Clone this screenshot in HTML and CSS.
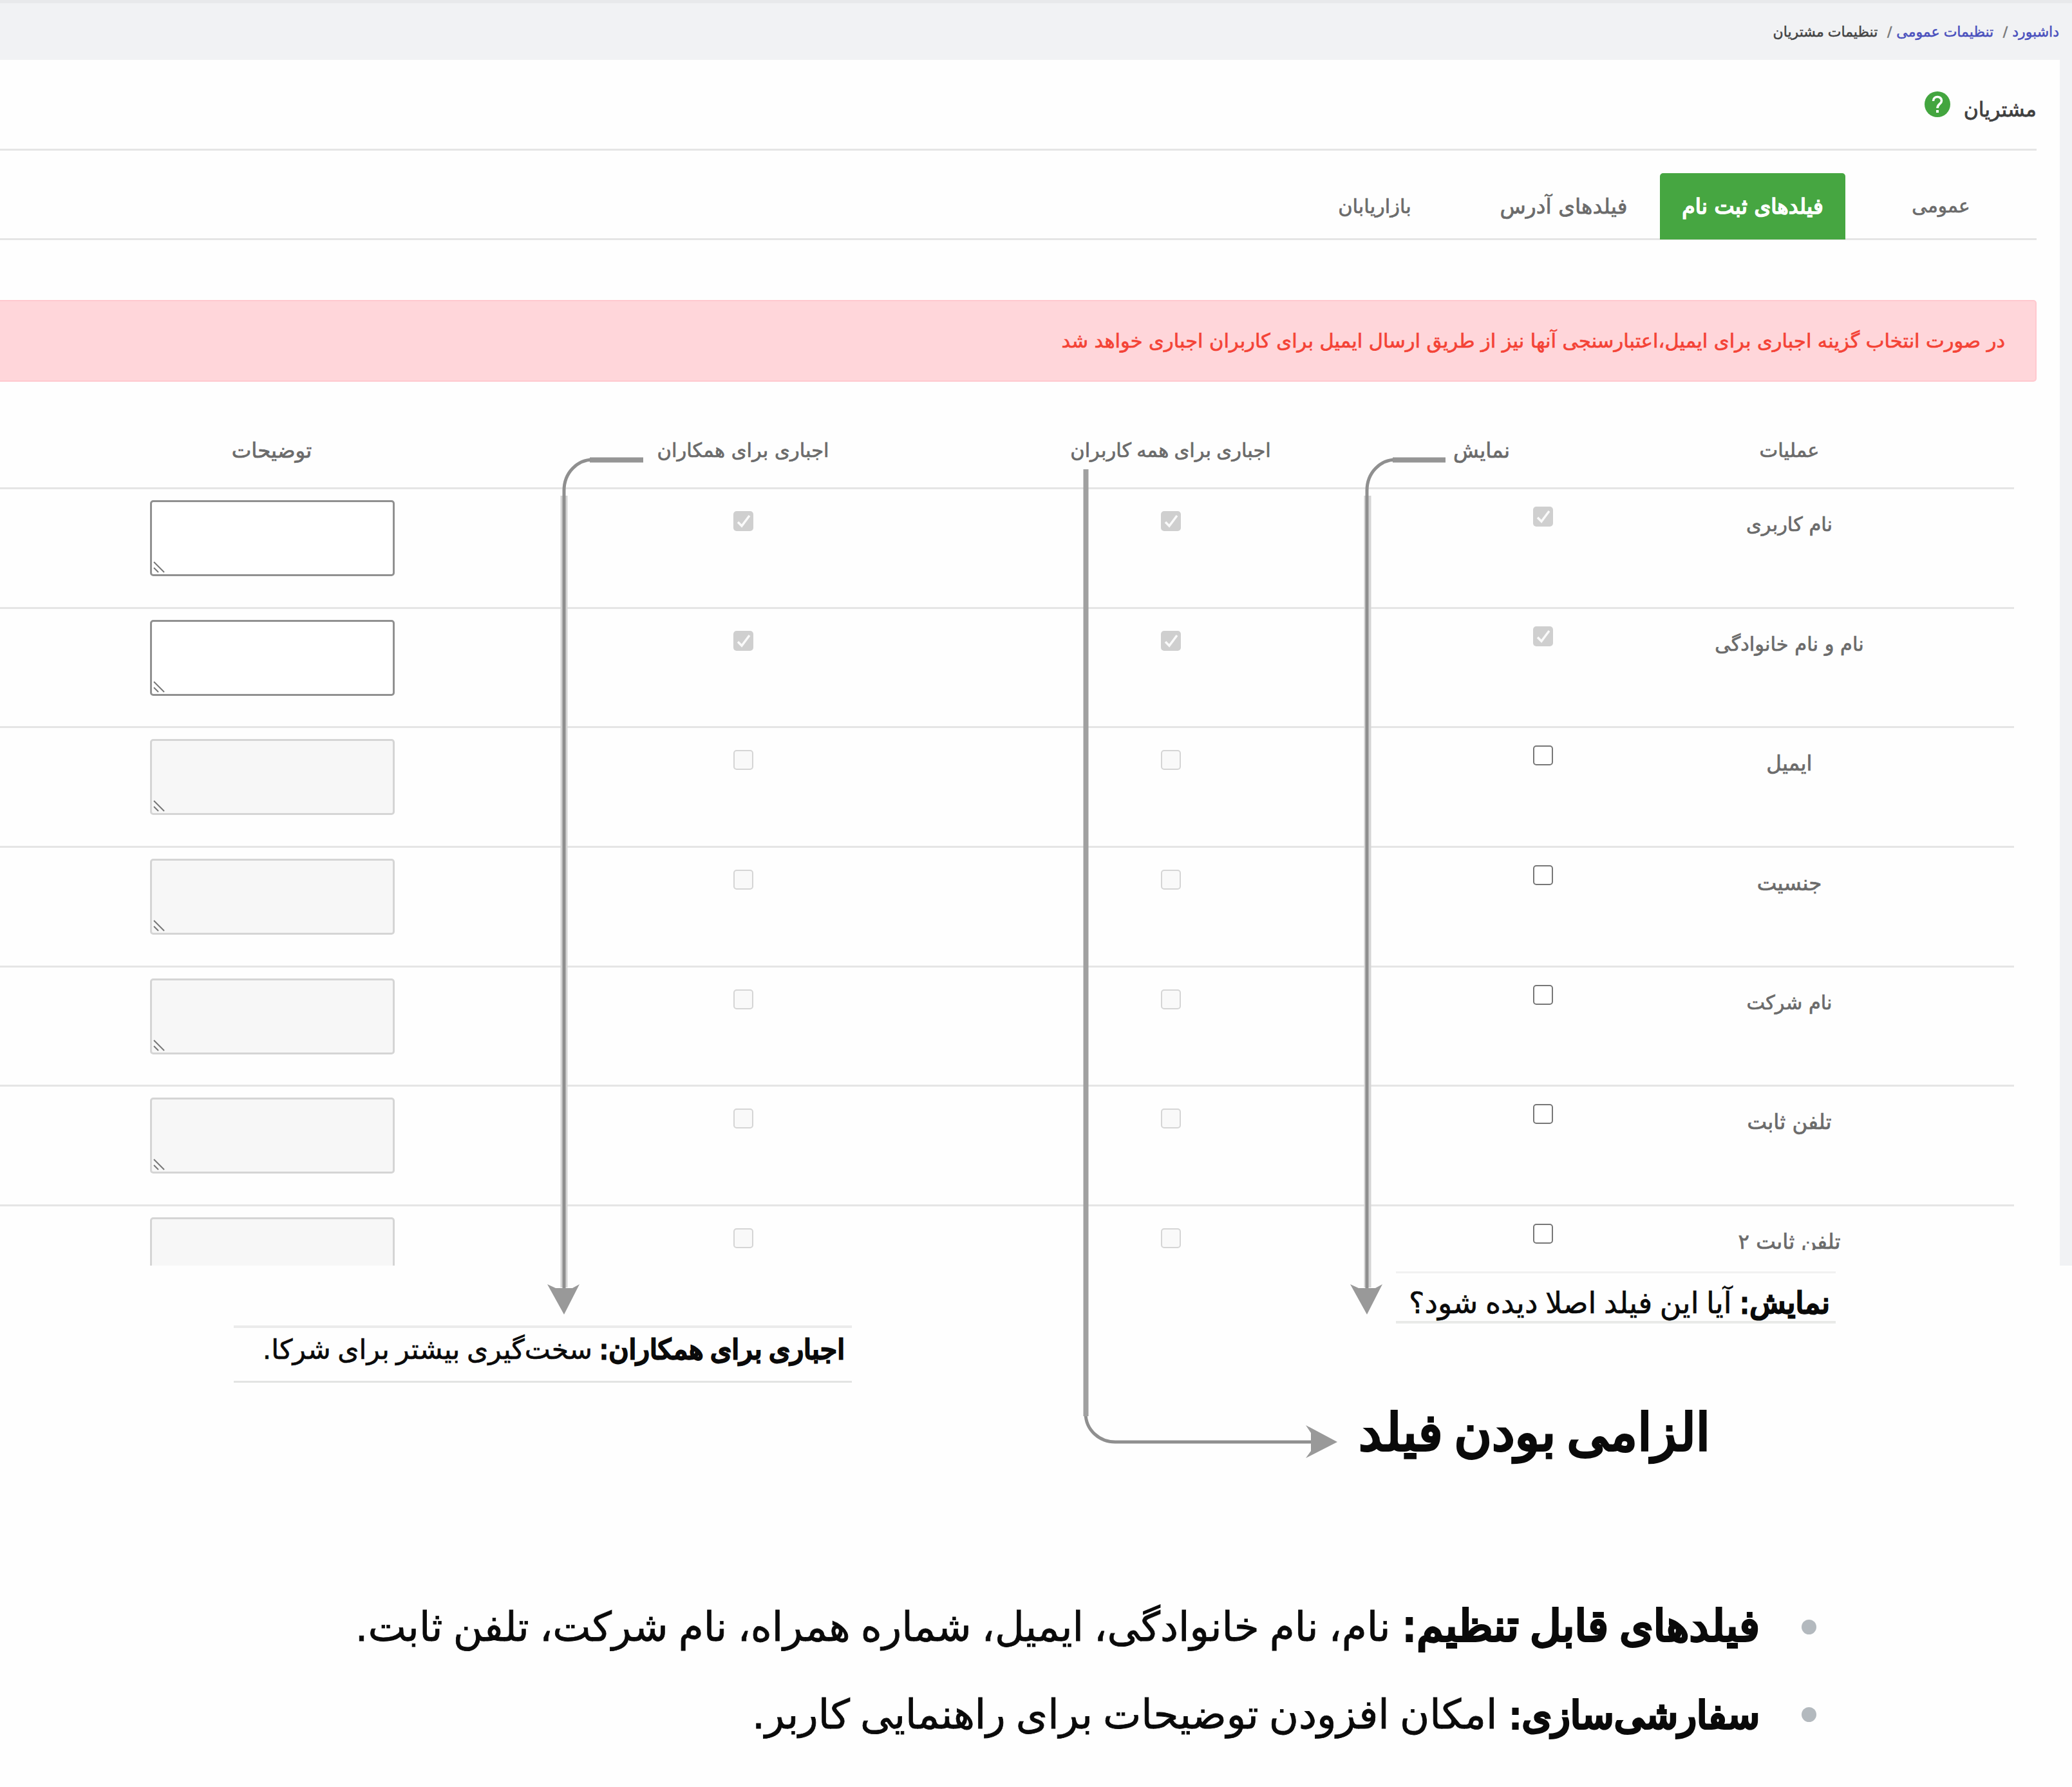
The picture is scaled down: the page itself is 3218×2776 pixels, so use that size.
FILE: index.html
```html
<!DOCTYPE html>
<html lang="fa" dir="rtl">
<head>
    <meta charset="UTF-8">
    <meta name="viewport" content="width=device-width, initial-scale=1.0">
    <title>تنظیمات مشتریان</title>
    <link rel="stylesheet" href="styles.css">
</head>
<body>
    <svg class="defs" width="0" height="0">
        <symbol id="check" viewBox="0 0 31 31">
            <path d="M7 17 L13 23 L25 7" fill="none" stroke="#fafafa" stroke-width="3.5"/>
        </symbol>
        <symbol id="grip" viewBox="0 0 18 18">
            <path d="M1 1 L17 17 M1 10 L8 17" fill="none" stroke="#777" stroke-width="2"/>
        </symbol>
    </svg>

    <div class="page">
        <nav class="breadcrumb">
            <a href="#">داشبورد</a>
            <span class="sep">/</span>
            <a href="#">تنظیمات عمومی</a>
            <span class="sep">/</span>
            <span>تنظیمات مشتریان</span>
        </nav>

        <main class="card">
            <header class="card-header">
                <h1>مشتریان</h1>
                <svg class="help" viewBox="0 0 40 40">
                    <circle cx="20" cy="20" r="20" fill="#43a53f"/>
                    <path d="M13.5 15 C13.5 6.5 26.500 6.500 26.500 14.500 C26.500 19.500 20 19.500 20 26" fill="none" stroke="#fff" stroke-width="3.6"/>
                    <rect x="18" y="29" width="4" height="4" fill="#fff"/>
                </svg>
            </header>

            <ul class="tabs">
                <li class="tab tab-general">عمومی</li>
                <li class="tab tab-register active">فیلدهای ثبت نام</li>
                <li class="tab tab-address">فیلدهای آدرس</li>
                <li class="tab tab-marketer">بازاریابان</li>
            </ul>

            <div class="alert">در صورت انتخاب گزینه اجباری برای ایمیل،اعتبارسنجی آنها نیز از طریق ارسال ایمیل برای کاربران اجباری خواهد شد</div>

            <div class="fields">
                <div class="row head">
                    <div>عملیات</div>
                    <div class="wide">نمایش</div>
                    <div class="tight">اجباری برای همه کاربران</div>
                    <div>اجباری برای همکاران</div>
                    <div class="wide">توضیحات</div>
                </div>
                <div class="row">
                    <div class="label">نام کاربری</div>
                    <div class="show"><span class="box checked"><svg><use href="#check"/></svg></span></div>
                    <div class="must"><span class="box checked"><svg><use href="#check"/></svg></span></div>
                    <div class="must"><span class="box checked"><svg><use href="#check"/></svg></span></div>
                    <div class="desc"><div class="area"><svg><use href="#grip"/></svg></div></div>
                </div>
                <div class="row">
                    <div class="label">نام و نام خانوادگی</div>
                    <div class="show"><span class="box checked"><svg><use href="#check"/></svg></span></div>
                    <div class="must"><span class="box checked"><svg><use href="#check"/></svg></span></div>
                    <div class="must"><span class="box checked"><svg><use href="#check"/></svg></span></div>
                    <div class="desc"><div class="area"><svg><use href="#grip"/></svg></div></div>
                </div>
                <div class="row">
                    <div class="label wide">ایمیل</div>
                    <div class="show"><span class="box"></span></div>
                    <div class="must"><span class="box disabled"></span></div>
                    <div class="must"><span class="box disabled"></span></div>
                    <div class="desc"><div class="area disabled"><svg><use href="#grip"/></svg></div></div>
                </div>
                <div class="row">
                    <div class="label wide">جنسیت</div>
                    <div class="show"><span class="box"></span></div>
                    <div class="must"><span class="box disabled"></span></div>
                    <div class="must"><span class="box disabled"></span></div>
                    <div class="desc"><div class="area disabled"><svg><use href="#grip"/></svg></div></div>
                </div>
                <div class="row">
                    <div class="label">نام شرکت</div>
                    <div class="show"><span class="box"></span></div>
                    <div class="must"><span class="box disabled"></span></div>
                    <div class="must"><span class="box disabled"></span></div>
                    <div class="desc"><div class="area disabled"><svg><use href="#grip"/></svg></div></div>
                </div>
                <div class="row">
                    <div class="label wide">تلفن ثابت</div>
                    <div class="show"><span class="box"></span></div>
                    <div class="must"><span class="box disabled"></span></div>
                    <div class="must"><span class="box disabled"></span></div>
                    <div class="desc"><div class="area disabled"><svg><use href="#grip"/></svg></div></div>
                </div>
                <div class="row">
                    <div class="label wide cut">تلفن ثابت ۲</div>
                    <div class="show"><span class="box"></span></div>
                    <div class="must"><span class="box disabled"></span></div>
                    <div class="must"><span class="box disabled"></span></div>
                    <div class="desc"><div class="area disabled"></div></div>
                </div>
            </div>
        </main>

        <ul class="notes">
            <li><b class="note-fields">فیلدهای قابل تنظیم:</b> <span>نام، نام خانوادگی، ایمیل، شماره همراه، نام شرکت، تلفن ثابت.</span></li>
            <li><b class="note-custom">سفارشی‌سازی:</b> <span>امکان افزودن توضیحات برای راهنمایی کاربر.</span></li>
        </ul>

        <!-- callout lines over the table -->
        <svg class="arrows" viewBox="0 0 3218 2776">
            <g fill="none" stroke="#d4d4d4" stroke-width="11">
                <path d="M2124 770 V2000"/>
                <path d="M876 770 V2000"/>
            </g>
            <g fill="none" stroke="#8f8f8f" stroke-width="5">
                <path d="M2190 714 H2168 C2144 714 2123 734 2123 762 V2006"/>
                <path d="M945 714 H921 C897 714 876 734 876 762 V2006"/>
                <path d="M1686 2195 C1686 2222 1708 2240 1732 2240 H2040"/>
            </g>
            <g fill="none" stroke="#959595" stroke-width="8">
                <path d="M2163 714.500 H2245"/>
                <path d="M916 714.500 H999"/>
                <path d="M1686.500 729 V2200" stroke="#a0a0a0"/>
            </g>
            <g fill="#999">
                <path d="M2097 1995 L2110 2001 H2136 L2147 1995 L2123 2042 Z"/>
                <path d="M850 1995 L863 2001 H889 L900 1995 L876 2042 Z"/>
                <path d="M2028 2214 L2036 2226 V2254 L2028 2265 L2077 2240 Z"/>
            </g>
        </svg>

        <div class="callout callout-show"><b>نمایش:</b> <span>آیا این فیلد اصلا دیده شود؟</span></div>
        <div class="callout callout-partner"><b>اجباری برای همکاران:</b> <span>سخت‌گیری بیشتر برای شرکا.</span></div>
        <div class="callout-title">الزامی بودن فیلد</div>
    </div>
</body>
</html>
```
FILE: styles.css
```css
* {
    box-sizing: border-box;
    margin: 0;
    padding: 0;
}

body {
    font-family: "DejaVu Sans", sans-serif;
    font-size: 30.5px;
    background: #fefefe;
    color: #6b6b6b;
}

ul {
    list-style: none;
}

.defs {
    position: absolute;
}

.page {
    position: relative;
    width: 3218px;
    height: 2776px;
    overflow: hidden;
}

/* breadcrumb */
.breadcrumb {
    display: flex;
    height: 93px;
    padding: 7px 20px 0 0;
    border-top: 5px solid #e8e9eb;
    background: #f1f2f4;
    font-size: 22px;
    line-height: 76px;
    word-spacing: -1px;
    color: #444;
    -webkit-text-stroke: 0.5px;
}

.breadcrumb a {
    color: #4a50bd;
    text-decoration: none;
}

.breadcrumb .sep {
    width: 29px;
    padding-right: 7px;
    color: #777;
}

/* main card */
.card {
    height: 1873px;
    padding-right: 36px;
    border-right: 19px solid #f1f2f4;
    overflow: hidden;
    background: #fefefe;
}

.card-header {
    display: flex;
    align-items: center;
    gap: 21px;
    height: 141px;
    border-bottom: 3px solid #e5e5e5;
}

.card-header h1 {
    padding-top: 18px;
    font-size: 31.5px;
    font-weight: normal;
    line-height: 1;
    color: #3f3f3f;
    -webkit-text-stroke: 0.8px;
}

.help {
    width: 40px;
    height: 40px;
}

.tabs {
    display: flex;
    height: 104px;
    margin-top: 35px;
    border-bottom: 3px solid #e5e5e5;
    -webkit-text-stroke: 0.7px;
}

.tab {
    height: 103px;
    line-height: 103px;
    text-align: center;
}

.tab-general {
    width: 297px;
    font-size: 29.5px;
}

.tab-register {
    width: 288px;
    font-size: 33px;
}

.tab-address {
    width: 299px;
    font-size: 33px;
}

.tab-marketer {
    width: 288px;
}

.tab.active {
    border-radius: 5px 5px 0 0;
    background: #46a641;
    color: #fff;
    -webkit-text-stroke: 1.7px;
}

.alert {
    height: 127px;
    margin-top: 93px;
    padding-right: 47px;
    border: 2px solid #ffc9cf;
    border-left: 0;
    border-radius: 0 5px 5px 0;
    background: #ffd6da;
    color: #f44336;
    line-height: 124px;
    white-space: nowrap;
    word-spacing: -0.2px;
    -webkit-text-stroke: 0.7px;
}

/* fields table */
.fields {
    margin-right: 35px;
    -webkit-text-stroke: 0.7px;
}

.row {
    display: grid;
    grid-template-columns: 698px 258px 708px 620px 844px;
    height: 185.7px;
    border-bottom: 3px solid #e5e5e5;
    line-height: 60px;
    text-align: center;
}

.row.head {
    height: 167px;
    padding-top: 77px;
}

.tight {
    word-spacing: -1.5px;
}

.wide {
    font-size: 32.5px;
}

.label {
    padding-top: 25px;
}

.label.cut {
    height: 68px;
    overflow: hidden;
}

.show {
    display: flex;
    padding: 27px 18px 0 0;
}

.must {
    display: flex;
    justify-content: center;
    padding-top: 34px;
}

.desc {
    display: flex;
    justify-content: center;
    padding: 17px 0 0 1px;
}

.box {
    width: 31px;
    height: 31px;
    border: 2.5px solid #777;
    border-radius: 5px;
    background: #fff;
}

.box.disabled {
    border-color: #d5d5d5;
    background: #f9f9f9;
}

.box.checked {
    border: 0;
    background: #cfcfcf;
}

.box svg {
    display: block;
    width: 31px;
    height: 31px;
}

.area {
    display: flex;
    justify-content: flex-end;
    align-items: flex-end;
    width: 380px;
    height: 118px;
    padding: 0 0 2px 2px;
    border: 3px solid #909090;
    border-radius: 5px;
    background: #fff;
}

.area.disabled {
    border-color: #d5d5d5;
    background: #f7f7f7;
}

.area svg {
    width: 18px;
    height: 18px;
}

/* notes under the card */
.notes {
    padding: 492px 397px 0 0;
    font-size: 63px;
    line-height: 137px;
    color: #0a0a0a;
}

.notes li {
    display: flex;
    align-items: baseline;
    height: 137px;
    white-space: nowrap;
    word-spacing: -4px;
    -webkit-text-stroke: 0.8px;
}

.notes li::before {
    content: "";
    width: 23px;
    height: 23px;
    margin-left: 65px;
    border-radius: 50%;
    background: #b3b9be;
    transform: translateY(-10px);
}

.notes b {
    margin-left: 18px;
    font-weight: normal;
    -webkit-text-stroke: 4px;
}

.note-fields {
    font-size: 67px;
}

.note-custom {
    font-size: 59.5px;
}

/* callouts */
.arrows {
    position: absolute;
    top: 0;
    left: 0;
    width: 3218px;
    height: 2776px;
}

.callout {
    position: absolute;
    display: flex;
    color: #0a0a0a;
    white-space: nowrap;
    word-spacing: -3px;
    -webkit-text-stroke: 0.6px;
}

.callout b {
    font-weight: normal;
    -webkit-text-stroke: 2.8px;
}

.callout-show {
    top: 1975px;
    left: 2168px;
    width: 683px;
    height: 81px;
    padding-right: 9px;
    gap: 12px;
    border-top: 3px solid #f1f1f1;
    border-bottom: 4px solid #e9eae8;
    font-size: 46px;
    line-height: 92px;
}

.callout-partner {
    top: 2059px;
    left: 363px;
    width: 960px;
    height: 89px;
    padding-right: 11px;
    gap: 11px;
    border-top: 4px solid #ebebeb;
    border-bottom: 3px solid #e3e4e3;
    font-size: 42.6px;
    line-height: 66px;
}

.callout-title {
    position: absolute;
    top: 2166px;
    left: 2109px;
    width: 548px;
    color: #0a0a0a;
    font-size: 80px;
    line-height: 120px;
    text-align: center;
    white-space: nowrap;
    word-spacing: -8px;
    -webkit-text-stroke: 4px;
}
```
